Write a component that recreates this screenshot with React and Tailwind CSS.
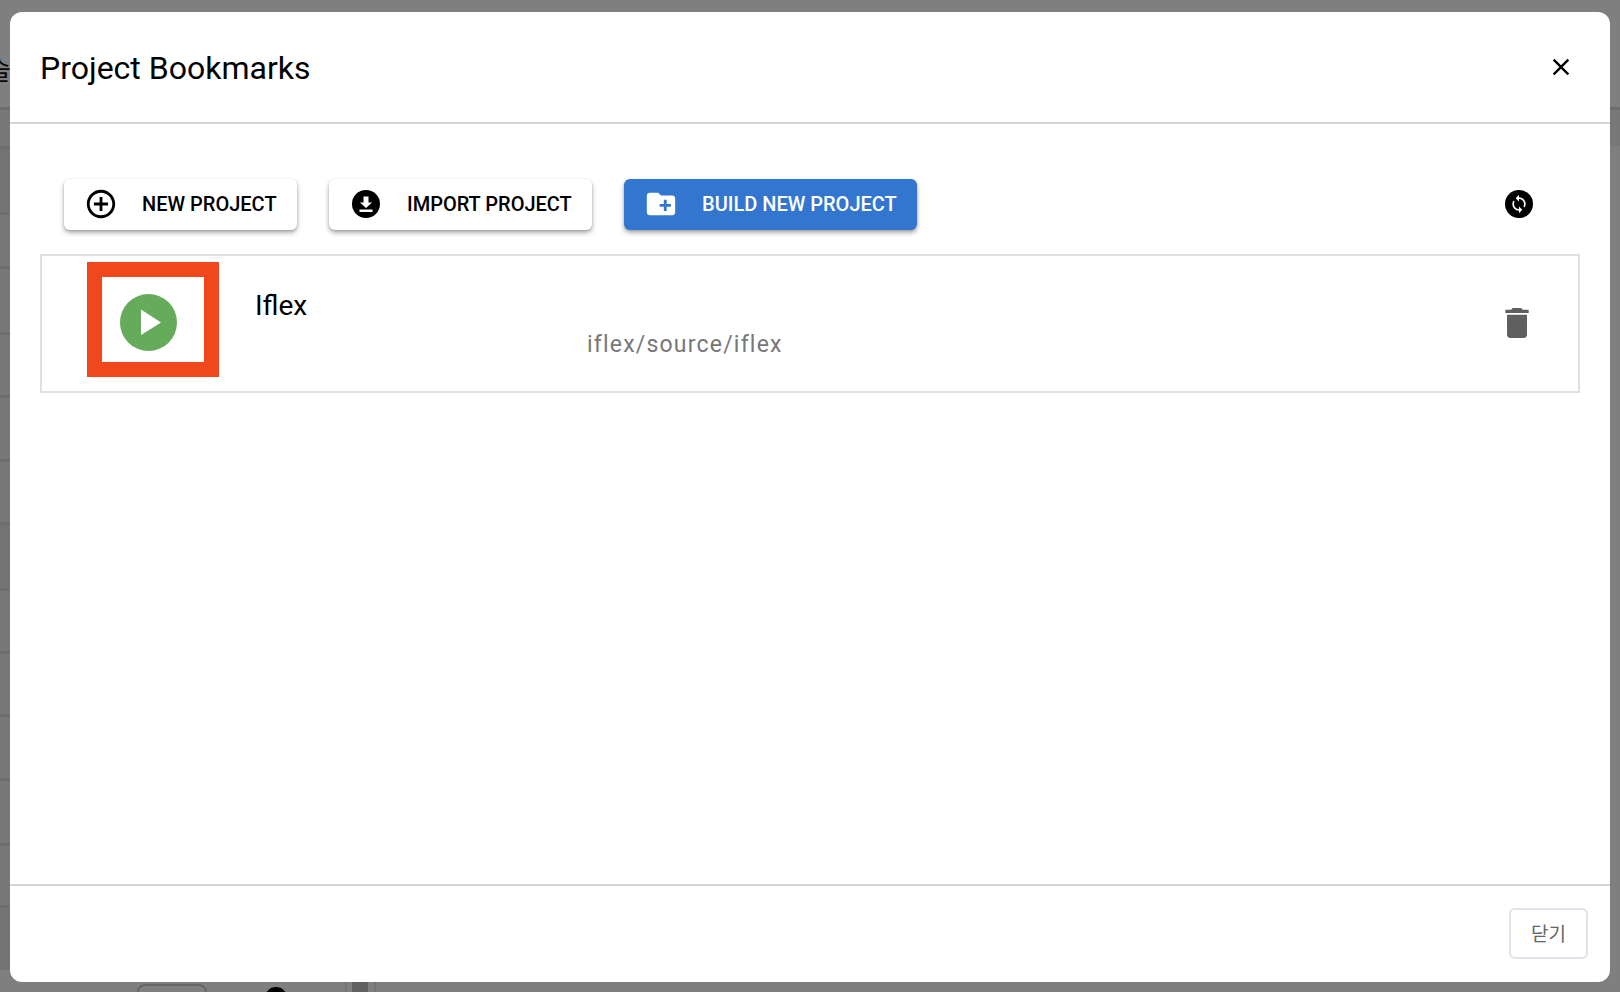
const ROWS = [
  { h: "h-[66px]", dark: true },
  { h: "h-[54px]" },
  { h: "h-[66px]" },
  { h: "h-[63px]" },
  { h: "h-[64px]" },
  { h: "h-[63px]" },
  { h: "h-[66px]", dark: true },
  { h: "h-[63px]" },
  { h: "h-[63px]" },
  { h: "h-[64px]" },
  { h: "h-[65px]" },
  { h: "h-[62px]" },
  { h: "h-[65px]", dark: true },
];

function MuiIcon({ d, className }) {
  return (
    <svg viewBox="0 0 24 24" fill="currentColor" className={className}>
      <path d={d} />
    </svg>
  );
}

function ToolButton({ icon, label, primary, className }) {
  return (
    <button
      className={`flex h-[51px] items-center rounded-[6px] pb-[2px] text-[20px] leading-none font-medium shadow-[0_3px_5px_rgba(0,0,0,0.3),0_1px_3px_rgba(0,0,0,0.15)] ${
        primary ? "bg-[#3276d0] text-white" : "bg-white text-black"
      } ${className}`}
    >
      {icon}
      {label}
    </button>
  );
}

function BackgroundPage() {
  return (
    <div className="flex h-[992px] w-full flex-col overflow-hidden bg-white">
      <div className="h-[107px] shrink-0 overflow-hidden pt-[53px]">
        <span className="-ml-[13px] block text-[26px] leading-[32px] text-[#111] [font-family:'Noto_Sans_CJK_KR',sans-serif]">
          슬
        </span>
      </div>
      <div className="h-[3px] shrink-0 bg-[#d9d9e2]" />
      <div className="h-[36px] shrink-0 bg-[#f1f1f1]" />
      {ROWS.map((row, i) => (
        <div
          key={i}
          className={`w-[20px] shrink-0 border-t-[3px] border-[#dcdcdc] ${row.h} ${
            row.dark ? "bg-[#e4e8ec]" : "bg-[#f1f1f1]"
          }`}
        />
      ))}
      <div className="flex h-[22px] shrink-0 items-start pl-[137px]">
        <div className="mt-[14px] h-[20px] w-[70px] rounded-t-[8px] border-2 border-[#cccccc]" />
        <div className="mt-[17px] ml-[58px] size-[22px] rounded-full bg-black" />
        <div className="ml-[58px] h-[22px] w-[2px] bg-[#e6e6e6]" />
        <div className="ml-[5px] h-[22px] w-[16px] bg-[#c0c0c0]" />
        <div className="ml-[6px] h-[22px] w-[2px] bg-[#e6e6e6]" />
      </div>
    </div>
  );
}

export default function App() {
  return (
    <div className="relative h-[992px] w-full overflow-hidden [font-family:Roboto,sans-serif]">
      <BackgroundPage />
      <div className="absolute inset-0 bg-black/50" />

      <div className="absolute top-[12px] left-[10px] flex h-[970px] w-[1600px] flex-col rounded-[12px] bg-white">
        {/* header */}
        <div className="flex h-[112px] shrink-0 items-center justify-between border-b-2 border-[#d1d5db] pr-[35px] pl-[30px]">
          <h1 className="pt-[2px] text-[32px] leading-none font-normal text-black">
            Project Bookmarks
          </h1>
          <MuiIcon
            className="size-[28px] text-black"
            d="M19 6.41L17.59 5 12 10.59 6.41 5 5 6.41 10.59 12 5 17.59 6.41 19 12 13.41 17.59 19 19 17.59 13.41 12z"
          />
        </div>

        {/* body */}
        <div className="flex-1 px-[30px] pt-[55px]">
          <div className="flex items-center pr-[47px] pl-[24px]">
            <ToolButton
              className="w-[233px] pl-[20px]"
              label="NEW PROJECT"
              icon={
                <MuiIcon
                  className="mr-[24px] size-[34px] text-black"
                  d="M13 7h-2v4H7v2h4v4h2v-4h4v-2h-4V7zm-1-5C6.48 2 2 6.48 2 12s4.48 10 10 10 10-4.48 10-10S17.52 2 12 2zm0 18c-4.41 0-8-3.59-8-8s3.59-8 8-8 8 3.59 8 8-3.59 8-8 8z"
                />
              }
            />
            <ToolButton
              className="ml-[32px] w-[263px] pl-[23px]"
              label="IMPORT PROJECT"
              icon={
                <svg viewBox="0 0 28 28" className="mr-[27px] size-[28px]">
                  <circle cx="14" cy="14" r="14" fill="#000" />
                  <path d="M11.5 6.5h5v6h3.5L14 18l-6-5.500h3.500z" fill="#fff" />
                  <rect x="7.500" y="19.500" width="13" height="2.500" fill="#fff" />
                </svg>
              }
            />
            <ToolButton
              primary
              className="ml-[32px] w-[293px] pl-[20px]"
              label="BUILD NEW PROJECT"
              icon={
                <MuiIcon
                  className="mr-[24px] size-[34px] text-white"
                  d="M20 6h-8l-2-2H4c-1.110 0-1.990.890-1.990 2L2 18c0 1.110.890 2 2 2h16c1.110 0 2-.890 2-2V8c0-1.110-.890-2-2-2zm-1 8h-3v3h-2v-3h-3v-2h3V9h2v3h3v2z"
                />
              }
            />
            <div className="mb-[2px] ml-auto flex size-[28px] items-center justify-center rounded-full bg-black">
              <MuiIcon
                className="size-[20px] text-white"
                d="M12 4V1L8 5l4 4V6c3.310 0 6 2.690 6 6 0 1.010-.250 1.970-.700 2.800l1.460 1.460C19.540 15.030 20 13.570 20 12c0-4.420-3.580-8-8-8zm0 14c-3.310 0-6-2.690-6-6 0-1.010.250-1.970.700-2.800L5.240 7.740C4.460 8.970 4 10.430 4 12c0 4.420 3.580 8 8 8v3l4-4-4-4v3z"
              />
            </div>
          </div>

          {/* bookmark row */}
          <div className="relative mt-[24px] flex h-[139px] items-center border-2 border-[#e0e0e0] pr-[41px] pl-[78px]">
            <svg viewBox="0 0 57 57" className="mb-[2px] size-[57px] shrink-0">
              <circle cx="28.500" cy="28.500" r="28.500" fill="#66ab5b" />
              <path d="M21 15.500L41 28.500 21 41z" fill="#fff" />
            </svg>
            <div className="ml-[78px] flex flex-col">
              <span className="text-[28px] leading-[36px] text-black">Iflex</span>
              <span className="mt-[5px] pl-[332px] text-[23px] leading-[31px] tracking-[1.2px] text-[#777777]">
                iflex/source/iflex
              </span>
            </div>
            <MuiIcon
              className="mb-[2px] ml-auto size-[40px] text-[#5f5f5f]"
              d="M6 19c0 1.100.900 2 2 2h8c1.100 0 2-.900 2-2V7H6v12zM19 4h-3.500l-1-1h-5l-1 1H5v2h14V4z"
            />
            {/* annotation box drawn on top of the screenshot */}
            <div className="absolute top-[6px] left-[45px] h-[115px] w-[132px] border-[15px] border-[#f0481c]" />
          </div>
        </div>

        {/* footer */}
        <div className="flex h-[98px] shrink-0 items-start justify-end border-t-2 border-[#d1d5db] pt-[22px] pr-[22px]">
          <button className="flex h-[51px] w-[79px] items-center justify-center rounded-[6px] border-2 border-[#dfe2e8] text-[19px] text-[#666666] [font-family:'Noto_Sans_CJK_KR',sans-serif]">
            닫기
          </button>
        </div>
      </div>
    </div>
  );
}
